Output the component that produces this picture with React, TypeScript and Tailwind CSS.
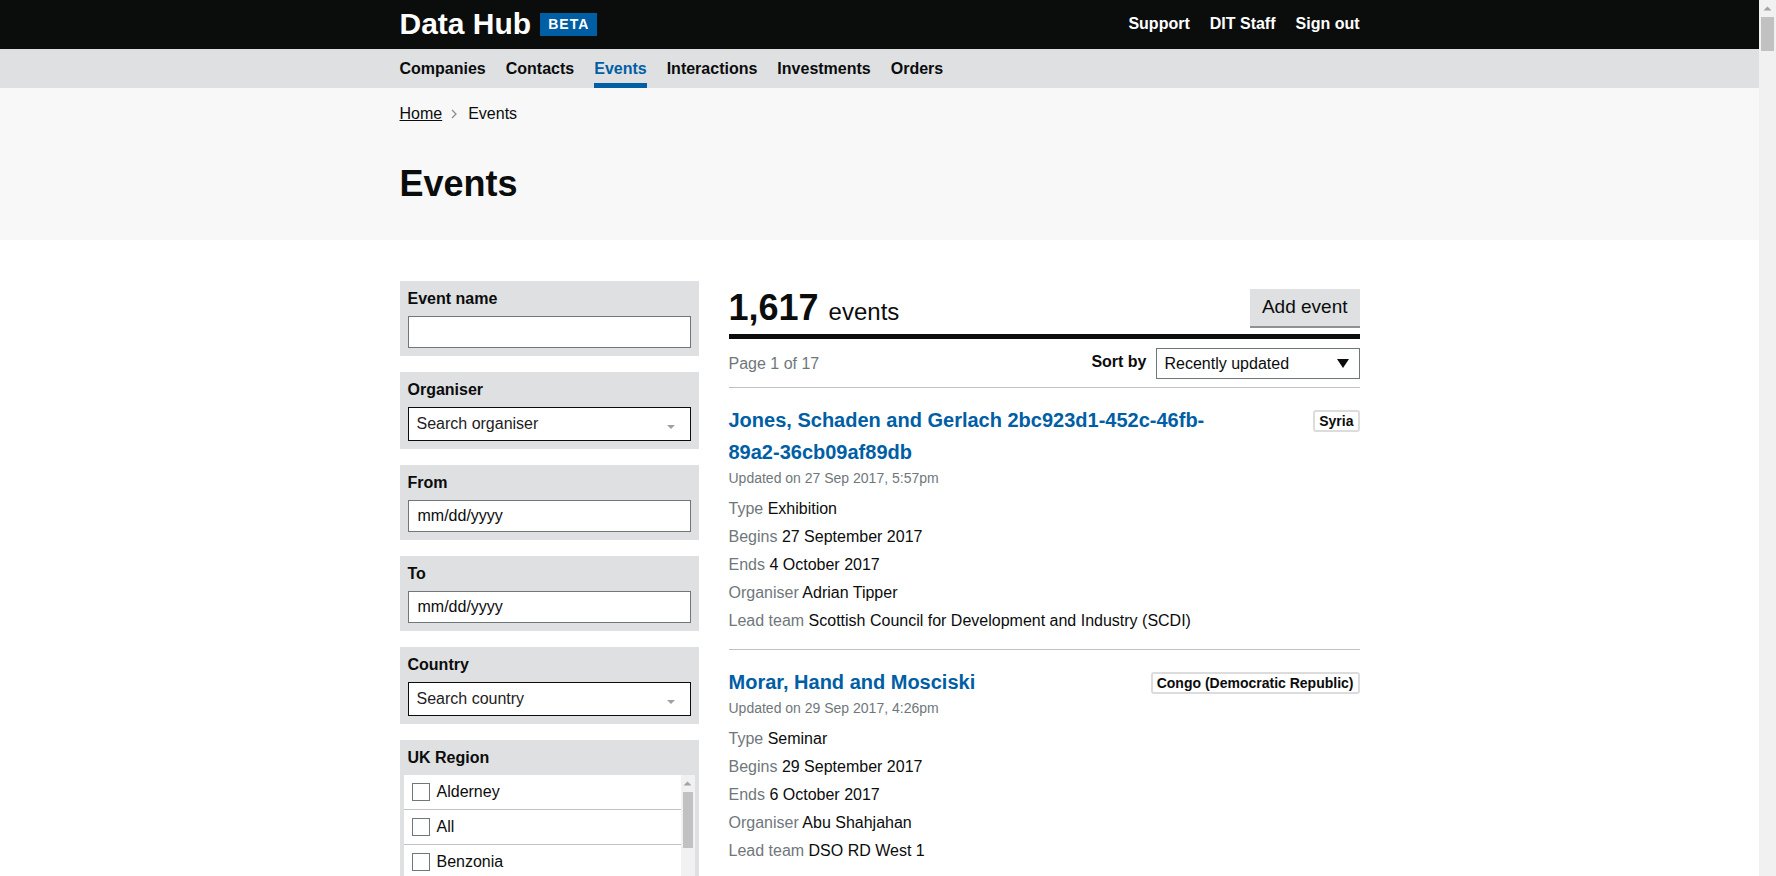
import React from "react";

type Ev = {
  title: string;
  country: string;
  updated: string;
  type: string;
  begins: string;
  ends: string;
  organiser: string;
  team: string;
};

const events: Ev[] = [
  {
    title: "Jones, Schaden and Gerlach 2bc923d1-452c-46fb-89a2-36cb09af89db",
    country: "Syria",
    updated: "Updated on 27 Sep 2017, 5:57pm",
    type: "Exhibition",
    begins: "27 September 2017",
    ends: "4 October 2017",
    organiser: "Adrian Tipper",
    team: "Scottish Council for Development and Industry (SCDI)",
  },
  {
    title: "Morar, Hand and Mosciski",
    country: "Congo (Democratic Republic)",
    updated: "Updated on 29 Sep 2017, 4:26pm",
    type: "Seminar",
    begins: "29 September 2017",
    ends: "6 October 2017",
    organiser: "Abu Shahjahan",
    team: "DSO RD West 1",
  },
  {
    title: "Kuhn, Bartell and Hessel",
    country: "France",
    updated: "Updated on 28 Sep 2017, 11:02am",
    type: "Conference",
    begins: "2 October 2017",
    ends: "5 October 2017",
    organiser: "Emma Green",
    team: "British Embassy Paris",
  },
  {
    title: "Wolff - Ritchie",
    country: "Germany",
    updated: "Updated on 26 Sep 2017, 3:41pm",
    type: "Trade mission",
    begins: "10 October 2017",
    ends: "14 October 2017",
    organiser: "Paul Gain",
    team: "London International Trade Team",
  },
  {
    title: "Kerluke, Dicki and Hagenes",
    country: "Japan",
    updated: "Updated on 25 Sep 2017, 9:15am",
    type: "Outward mission",
    begins: "16 October 2017",
    ends: "20 October 2017",
    organiser: "Jane Bloggs",
    team: "Welsh Government",
  },
];

const regions = [
  "Alderney", "All", "Benzonia", "Channel Islands", "East Midlands", "East of England",
  "Guernsey", "Isle of Man", "Jersey", "London", "North East", "North West",
  "Northern Ireland", "Scotland", "South East", "South West", "Wales", "West Midlands",
  "Yorkshire and The Humber",
];

function SmallArrow() {
  return (
    <svg width="10" height="6" viewBox="0 0 10 6" className="mt-[6px]">
      <polygon points="1,1 9,1 5,5" fill="#a0a0a0" />
    </svg>
  );
}

function UpArrow() {
  return (
    <svg width="9" height="5" viewBox="0 0 9 5">
      <polygon points="0.5,4.5 8.5,4.5 4.5,0.5" fill="#a3a3a3" />
    </svg>
  );
}

function TextBox({ label, value }: { label: string; value?: string }) {
  return (
    <div className="bg-[#dee0e2] p-2 mb-4">
      <div className="font-bold text-[16px] leading-[19px] mb-2">{label}</div>
      <div className="h-[32px] bg-white border border-[#6f777b] flex items-center pl-[9px] text-[16px]">
        {value}
      </div>
    </div>
  );
}

function SearchBox({ label, placeholder }: { label: string; placeholder: string }) {
  return (
    <div className="bg-[#dee0e2] p-2 mb-4">
      <div className="font-bold text-[16px] leading-[19px] mb-2">{label}</div>
      <div className="h-[34px] bg-white border border-[#0b0c0c] flex items-center justify-between pl-[8px] pr-[14px] text-[16px] text-[#222]">
        <span>{placeholder}</span>
        <SmallArrow />
      </div>
    </div>
  );
}

function EventItem({ ev }: { ev: Ev }) {
  const row = (k: string, v: string) => (
    <div className="text-[16px] leading-[28px]">
      <span className="text-[#6f777b]">{k}</span> {v}
    </div>
  );
  return (
    <div className="pt-4 pb-[14px] border-b border-[#bfc1c3]">
      <div className="flex justify-between items-start">
        <a className="max-w-[500px] text-[20px] font-bold leading-[32px] text-[#005ea5]">{ev.title}</a>
        <span className="mt-[6px] border-2 border-[#dcdcdc] rounded-[3px] px-1 text-[14px] font-bold leading-[18px] whitespace-nowrap">
          {ev.country}
        </span>
      </div>
      <div className="text-[14px] leading-[20px] text-[#6f777b] mb-[7px]">{ev.updated}</div>
      {row("Type", ev.type)}
      {row("Begins", ev.begins)}
      {row("Ends", ev.ends)}
      {row("Organiser", ev.organiser)}
      {row("Lead team", ev.team)}
    </div>
  );
}

export default function App() {
  return (
    <div className="flex h-screen font-['Liberation_Sans',Arial,sans-serif] text-[#0b0c0c] bg-white">
      <div className="flex-1 overflow-y-auto [scrollbar-width:none]">
        {/* Header */}
        <div className="bg-[#0b0c0c] h-[49px]">
          <div className="w-[960px] mx-auto h-full flex items-center justify-between">
            <div className="flex items-center">
              <span className="text-white text-[30px] font-bold leading-[30px] -mt-[2px]">Data Hub</span>
              <span className="ml-[9px] bg-[#005ea5] text-white text-[14px] font-bold tracking-[1px] leading-[23px] px-2">BETA</span>
            </div>
            <div className="flex items-center gap-5 text-white text-[16px] font-bold -mt-[2px]">
              <a>Support</a>
              <a>DIT Staff</a>
              <a>Sign out</a>
            </div>
          </div>
        </div>
        {/* Nav */}
        <div className="bg-[#dee0e2] h-[39px]">
          <div className="w-[960px] mx-auto h-full flex gap-5 text-[16px] font-bold">
            <a className="flex items-center pt-[5px] border-b-[5px] border-transparent">Companies</a>
            <a className="flex items-center pt-[5px] border-b-[5px] border-transparent">Contacts</a>
            <a className="flex items-center pt-[5px] border-b-[5px] border-[#005ea5] text-[#005ea5]">Events</a>
            <a className="flex items-center pt-[5px] border-b-[5px] border-transparent">Interactions</a>
            <a className="flex items-center pt-[5px] border-b-[5px] border-transparent">Investments</a>
            <a className="flex items-center pt-[5px] border-b-[5px] border-transparent">Orders</a>
          </div>
        </div>
        {/* Hero */}
        <div className="bg-[#f8f8f8]">
          <div className="w-[960px] mx-auto pt-4 pb-9">
            <div className="flex items-center text-[16px] leading-[20px]">
              <a className="underline">Home</a>
              <svg width="6" height="10" viewBox="0 0 6 10" className="ml-[9px]">
                <polyline points="1,1 5,5 1,9" fill="none" stroke="#8a8f92" strokeWidth="1.3" />
              </svg>
              <span className="ml-[11px]">Events</span>
            </div>
            <h1 className="mt-10 text-[36px] font-bold leading-[40px]">Events</h1>
          </div>
        </div>
        {/* Main */}
        <div className="w-[960px] mx-auto pt-[41px] flex gap-[30px] pb-16">
          <div className="w-[299px] shrink-0">
            <TextBox label="Event name" />
            <SearchBox label="Organiser" placeholder="Search organiser" />
            <TextBox label="From" value="mm/dd/yyyy" />
            <TextBox label="To" value="mm/dd/yyyy" />
            <SearchBox label="Country" placeholder="Search country" />
            <div className="bg-[#dee0e2] pt-2 px-1 pb-1 mb-4">
              <div className="px-1 font-bold text-[16px] leading-[19px] mb-2">UK Region</div>
              <div className="bg-white h-[250px] flex">
                <div className="flex-1 overflow-hidden">
                  {regions.map((r) => (
                    <label key={r} className="h-[35px] border-b border-[#bfc1c3] flex items-center pl-2 text-[16px]">
                      <span className="w-[18px] h-[18px] border border-[#6f777b] bg-white mr-[7px] shrink-0" />
                      {r}
                    </label>
                  ))}
                </div>
                <div className="w-[14px] bg-[#f1f1f1] flex flex-col items-center">
                  <div className="h-[17px] flex items-center justify-center">
                    <UpArrow />
                  </div>
                  <div className="w-[10px] h-[56px] bg-[#c1c1c1]" />
                </div>
              </div>
            </div>
          </div>
          <div className="flex-1 pt-[7px]">
            <div className="flex items-end justify-between pb-[6px] border-b-[5px] border-[#0b0c0c]">
              <h2 className="h-[40px] leading-[40px] whitespace-pre">
                <span className="text-[36px] font-bold leading-[40px]">1,617 </span>
                <span className="text-[24px] leading-[24px]">events</span>
              </h2>
              <button className="bg-[#dee0e2] shadow-[0_2px_0_#929191] h-[37px] px-3 text-[19px] mb-[2px]">Add event</button>
            </div>
            <div className="flex items-center justify-between pt-[9px] pb-2 border-b border-[#bfc1c3]">
              <span className="text-[16px] text-[#6f777b]">Page 1 of 17</span>
              <div className="flex items-center gap-[9px]">
                <span className="text-[16px] font-bold -mt-1">Sort by</span>
                <div className="w-[204px] h-[31px] border border-[#6f777b] flex items-center justify-between pl-[8px] pr-[10px] text-[16px]">
                  <span>Recently updated</span>
                  <svg width="12" height="9" viewBox="0 0 12 9">
                    <polygon points="0,0 12,0 6,9" fill="#0b0c0c" />
                  </svg>
                </div>
              </div>
            </div>
            {events.map((ev, i) => (
              <EventItem key={i} ev={ev} />
            ))}
            <div className="flex gap-2 pt-6 text-[16px] text-[#005ea5]">
              <span className="font-bold text-[#0b0c0c] px-2">1</span>
              <a className="px-2 underline">2</a>
              <a className="px-2 underline">3</a>
              <span className="px-2 text-[#6f777b]">…</span>
              <a className="px-2 underline">17</a>
              <a className="px-2 underline">Next</a>
            </div>
          </div>
        </div>
      </div>
      {/* Browser scrollbar */}
      <div className="w-[17px] shrink-0 bg-[#f1f1f1] flex flex-col items-center">
        <div className="h-[17px] flex items-center justify-center">
          <UpArrow />
        </div>
        <div className="w-[13px] h-[34px] bg-[#c1c1c1]" />
      </div>
    </div>
  );
}
